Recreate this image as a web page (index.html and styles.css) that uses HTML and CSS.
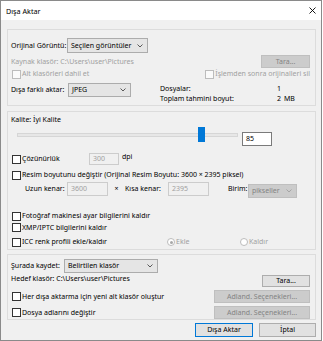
FILE: index.html
```html
<!DOCTYPE html>
<html lang="tr">
<head>
<meta charset="utf-8">
<title>Dışa Aktar</title>
<link rel="stylesheet" href="styles.css">
</head>
<body>
<div class="window">
  <div class="titlebar">
    <span class="title">Dışa Aktar</span>
    <svg class="close" width="7" height="7" viewBox="0 0 7 7"><path d="M0.5 0.5L6.5 6.5M6.5 0.5L0.5 6.5" stroke="#000" stroke-width="0.9" fill="none"/></svg>
  </div>
  <div class="body">
    <div class="group g1">
      <div class="row r1">
        <span class="lbl-orig">Orijinal Görüntü:</span>
        <div class="select sel-orig"><span>Seçilen görüntüler</span><svg class="chev" width="6" height="4" viewBox="0 0 6 4"><path d="M0.5 0.5L3 3L5.5 0.5" stroke="#333" stroke-width="0.8" fill="none"/></svg></div>
      </div>
      <div class="row r2">
        <span class="dis">Kaynak klasör: C:\Users\user\Pictures</span>
        <div class="btn disabled btn-tara1">Tara...</div>
      </div>
      <div class="row r3">
        <div class="cb dis"><span class="box box-dis"></span>Alt klasörleri dahil et</div>
        <div class="cb dis cb-right"><span class="box box-dis"></span>İşlemden sonra orijinalleri sil</div>
      </div>
      <div class="row r4">
        <div class="r4-left">
          <span class="lbl-farkli">Dışa farklı aktar:</span>
          <div class="select sel-jpeg"><span>JPEG</span><svg class="chev" width="6" height="4" viewBox="0 0 6 4"><path d="M0.5 0.5L3 3L5.5 0.5" stroke="#333" stroke-width="0.8" fill="none"/></svg></div>
        </div>
        <div class="stats">
          <span>Dosyalar:</span><span>1</span><span></span>
          <span>Toplam tahmini boyut:</span><span>2</span><span>MB</span>
        </div>
      </div>
    </div>

    <div class="group g2">
      <div class="kalite">Kalite: İyi Kalite</div>
      <div class="row slider-row">
        <div class="slider">
          <div class="track"></div>
          <div class="thumb"></div>
        </div>
        <div class="input quality">85</div>
      </div>
      <div class="row r-coz">
        <div class="cb cb-coz"><span class="box"></span>Çözünürlük</div>
        <div class="input disabled-in in-dpi">300</div>
        <span class="dpi">dpi</span>
      </div>
      <div class="row r-resim">
        <div class="cb"><span class="box"></span>Resim boyutunu değiştir (Orijinal Resim Boyutu: 3600 × 2395 piksel)</div>
      </div>
      <div class="row r-kenar">
        <span class="lbl-uzun">Uzun kenar:</span>
        <div class="input disabled-in in-kenar">3600</div>
        <span class="times">×</span>
        <span class="lbl-kisa">Kısa kenar:</span>
        <div class="input disabled-in in-kenar">2395</div>
        <span class="lbl-birim">Birim:</span>
        <div class="select disabled-sel sel-birim"><span>pikseller</span><svg class="chev" width="6" height="4" viewBox="0 0 6 4"><path d="M0.5 0.5L3 3L5.5 0.5" stroke="#9a9a9a" stroke-width="0.8" fill="none"/></svg></div>
      </div>
      <div class="row r-foto">
        <div class="cb"><span class="box"></span>Fotoğraf makinesi ayar bilgilerini kaldır</div>
      </div>
      <div class="row r-xmp">
        <div class="cb"><span class="box"></span>XMP/IPTC bilgilerini kaldır</div>
      </div>
      <div class="row r-icc">
        <div class="cb cb-icc"><span class="box"></span>ICC renk profili ekle/kaldır</div>
        <div class="radio dis radio-ekle"><span class="rdot checked"></span>Ekle</div>
        <div class="radio dis radio-kaldir"><span class="rdot"></span>Kaldır</div>
      </div>
    </div>

    <div class="group g3">
      <div class="row r-kaydet">
        <span class="lbl-kaydet">Şurada kaydet:</span>
        <div class="select sel-kaydet"><span>Belirtilen klasör</span><svg class="chev" width="6" height="4" viewBox="0 0 6 4"><path d="M0.5 0.5L3 3L5.5 0.5" stroke="#333" stroke-width="0.8" fill="none"/></svg></div>
      </div>
      <div class="row r-hedef">
        <span class="hedef">Hedef klasör: C:\Users\user\Pictures</span>
        <div class="btn btn-tara2">Tara...</div>
      </div>
      <div class="row r-her">
        <div class="cb"><span class="box"></span>Her dışa aktarma için yeni alt klasör oluştur</div>
        <div class="btn disabled btn-adland">Adland. Seçenekleri...</div>
      </div>
      <div class="row r-dosya">
        <div class="cb"><span class="box"></span>Dosya adlarını değiştir</div>
        <div class="btn disabled btn-adland">Adland. Seçenekleri...</div>
      </div>
    </div>

    <div class="actions">
      <div class="btn default btn-export">Dışa Aktar</div>
      <div class="btn btn-cancel">İptal</div>
    </div>
  </div>
</div>
</body>
</html>
```

FILE: styles.css
```css
* { box-sizing: border-box; margin: 0; padding: 0; }
html, body { margin: 0; background: #ffffff; }
body {
  font-family: "Noto Sans", "Open Sans", sans-serif;
  font-size: 7px;
  line-height: 10px;
  color: #000;
}
.window {
  width: 322px;
  height: 341px;
  border: 1px solid #8a8a8a;
  background: #f0f0f0;
  display: flex;
  flex-direction: column;
}
.titlebar {
  height: 19px;
  background: #ffffff;
  display: flex;
  align-items: center;
  padding-left: 5px;
  padding-right: 5px;
}
.title { flex: 1; font-size: 7.2px; }
.close { display: block; }
.body {
  flex: 1;
  padding: 9px 5px 0 6px;
  display: flex;
  flex-direction: column;
}
.group {
  border: 1px solid #dcdcdc;
  padding: 0 5px 0 3px;
  display: flex;
  flex-direction: column;
}
.g1 { height: 77px; }
.g2 { height: 139px; margin-top: 5px; }
.g3 { height: 66px; margin-top: 4px; }
.row { display: flex; align-items: center; }
.dis { color: #a0a0a0; }

/* group 1 */
.r1 { margin-top: 8px; height: 15px; }
.lbl-orig { width: 56px; }
.select {
  height: 15px;
  background: #e5e5e5;
  border: 1px solid #acacac;
  display: flex;
  align-items: center;
  padding-left: 3px;
  padding-right: 4px;
}
.select span { flex: 1; white-space: nowrap; }
.chev { display: block; }
.sel-orig { width: 81px; }
.r2 { margin-top: 2px; height: 13px; justify-content: space-between; }
.btn {
  height: 13px;
  background: #e1e1e1;
  border: 1px solid #adadad;
  display: flex;
  align-items: center;
  justify-content: center;
  white-space: nowrap;
}
.btn.disabled { background: #cccccc; border-color: #bfbfbf; color: #838383; }
.btn.default { border-color: #0078d7; }
.btn-tara1 { width: 49px; }
.r3 { height: 12px; justify-content: space-between; }
.cb { display: flex; align-items: center; white-space: nowrap; margin-left: 1px; }
.box {
  width: 9px;
  height: 9px;
  border: 1px solid #333;
  background: #fff;
  margin-right: 1px;
  flex: none;
}
.box-dis { border-color: #bcbcbc; background: #fafafa; }
.r4 { margin-top: 2px; height: 22px; align-items: flex-start; }
.r4-left { display: flex; align-items: center; margin-top: 1px; width: 149px; }
.lbl-farkli { width: 57px; }
.sel-jpeg { width: 63px; height: 14px; }
.stats {
  display: grid;
  grid-template-columns: 117px 7px auto;
  margin-top: 2px;
}

/* group 2 */
.kalite { margin-top: 3px; height: 10px; }
.slider-row { margin-top: 2px; height: 20px; align-items: flex-start; }
.slider { position: relative; width: 221px; height: 15px; margin-left: 6px; }
.track {
  position: absolute;
  left: 0; right: 0; top: 6px;
  height: 4px;
  background: #e7e7e7;
  border: 1px solid #d6d6d6;
}
.thumb {
  position: absolute;
  left: 181px; top: 0;
  width: 7px; height: 15px;
  background: #0078d7;
}
.input {
  height: 14px;
  background: #fff;
  border: 1px solid #7a7a7a;
  padding-left: 3px;
  display: flex;
  align-items: center;
}
.quality { width: 30px; margin-left: 4px; margin-top: 5px; }
.disabled-in { background: #f0f0f0; border-color: #cccccc; color: #a0a0a0; }
.r-coz { margin-top: 6px; height: 12px; }
.cb-coz { width: 77px; }
.in-dpi { width: 30px; height: 12px; }
.dpi { margin-left: 3px; align-self: flex-start; margin-top: -1px; }
.r-resim { margin-top: 5px; height: 10px; }
.r-kenar { margin-top: 2px; height: 16px; align-items: flex-start; }
.r-kenar > span { line-height: 14px; }
.lbl-uzun { margin-left: 14px; width: 42px; }
.in-kenar { width: 41px; }
.times { width: 17px; text-align: center; }
.lbl-kisa { width: 43px; }
.lbl-birim { margin-left: 19px; width: 20px; }
.disabled-sel { background: #cccccc; border-color: #bfbfbf; color: #838383; }
.sel-birim { width: 49px; height: 14px; margin-top: 2px; }
.r-foto { margin-top: 13px; height: 10px; }
.r-xmp { margin-top: 1px; height: 11px; }
.r-icc { margin-top: 4px; height: 10px; }
.cb-icc { width: 155px; }
.radio { display: flex; align-items: center; }
.radio-ekle { width: 73px; }
.rdot {
  width: 8px; height: 8px;
  border-radius: 50%;
  border: 1px solid #bcbcbc;
  background: #fff;
  margin-right: 1px;
  position: relative;
}
.rdot.checked::after {
  content: "";
  position: absolute;
  left: 1.5px; top: 1.5px;
  width: 3px; height: 3px;
  border-radius: 50%;
  background: #a8a8a8;
}

/* group 3 */
.r-kaydet { margin-top: 4px; height: 14px; }
.lbl-kaydet { width: 53px; }
.sel-kaydet { width: 94px; height: 14px; }
.r-hedef { margin-top: 1px; height: 14px; align-items: flex-start; justify-content: space-between; }
.hedef { margin-top: 0; }
.btn-tara2 { width: 48px; height: 12px; margin-top: 1px; }
.r-her { margin-top: 2px; height: 13px; justify-content: space-between; }
.r-dosya { margin-top: 3px; height: 13px; justify-content: space-between; }
.btn-adland { width: 96px; }

.actions {
  margin-top: 3px;
  display: flex;
  justify-content: flex-end;
  gap: 6px;
}
.actions .btn { height: 14px; }
.btn-export { width: 58px; }
.btn-cancel { width: 57px; }
```
